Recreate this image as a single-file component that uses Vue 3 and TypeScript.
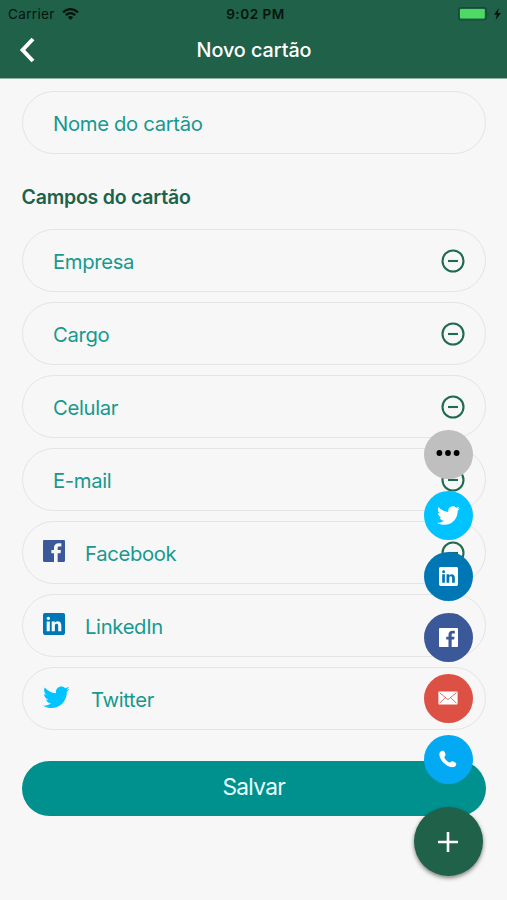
<script setup lang="ts">
type Brand = 'facebook' | 'linkedin' | 'twitter'

interface Field {
  label: string
  brand?: Brand
}

const brandShapes: Record<Brand, { box: string; d: string }> = {
  facebook: {
    box: '64 64 384 384',
    d: 'M426.8 64H85.2C73.5 64 64 73.5 64 85.2v341.6c0 11.7 9.5 21.2 21.2 21.2H256V296h-45.9v-56H256v-41.4c0-49.6 34.4-76.6 78.7-76.6 21.2 0 44 1.6 49.3 2.3v51.8h-35.3c-24.1 0-28.7 11.4-28.7 28.2V240h57.4l-7.5 56H320v152h106.8c11.7 0 21.2-9.5 21.2-21.2V85.2c0-11.7-9.5-21.2-21.2-21.2z',
  },
  linkedin: {
    box: '64 64 384 384',
    d: 'M417.2 64H96.8C79.3 64 64 76.6 64 93.9V415c0 17.4 15.3 32.9 32.8 32.9h320.3c17.6 0 30.8-15.6 30.8-32.9V93.9C448 76.6 434.7 64 417.2 64zM183 384h-55V213h55v171zm-25.6-197h-.4c-17.6 0-29-13.1-29-29.5 0-16.7 11.7-29.5 29.7-29.5s29 12.7 29.4 29.5c0 16.4-11.4 29.5-29.7 29.5zM384 384h-55v-93.5c0-22.4-8-37.7-27.9-37.7-15.2 0-24.2 10.3-28.2 20.3-1.5 3.6-1.9 8.5-1.9 13.5V384h-55V213h55v23.8c8-11.4 20.5-27.8 49.6-27.8 36.1 0 63.4 23.8 63.4 75.1V384z',
  },
  twitter: {
    box: '20 64 472 384',
    d: 'M492 109.5c-17.4 7.7-36 12.9-55.6 15.3 20-12 35.4-31 42.6-53.6-18.7 11.1-39.4 19.2-61.5 23.5C399.8 75.8 374.6 64 346.8 64c-53.5 0-96.8 43.4-96.8 96.9 0 7.6.8 15 2.5 22.1-80.5-4-151.9-42.6-199.6-101.3-8.3 14.3-13.1 31-13.1 48.7 0 33.6 17.2 63.3 43.2 80.7-16-.4-31-4.8-44-12.1v1.2c0 47 33.4 86.1 77.7 95-8.1 2.2-16.7 3.4-25.5 3.4-6.2 0-12.3-.6-18.2-1.8 12.3 38.5 48.1 66.5 90.5 67.3-33.1 26-74.9 41.5-120.3 41.5-7.8 0-15.5-.5-23.1-1.4C62.8 432 113.7 448 168.3 448 346.6 448 444 300.3 444 172.2c0-4.2-.1-8.4-.3-12.5C462.6 146 479 129 492 109.5z',
  },
}

const fields: Field[] = [
  { label: 'Empresa' },
  { label: 'Cargo' },
  { label: 'Celular' },
  { label: 'E-mail' },
  { label: 'Facebook', brand: 'facebook' },
  { label: 'LinkedIn', brand: 'linkedin' },
  { label: 'Twitter', brand: 'twitter' },
]

const brandActions: Brand[] = ['twitter', 'linkedin', 'facebook']
</script>

<template>
  <div class="screen">
    <header class="header">
      <div class="status">
        <div class="status-left">
          <span class="carrier">Carrier</span>
          <svg class="wifi" viewBox="0 0 17 12">
            <g fill="none" stroke="#06140e" stroke-width="2.3">
              <path d="M1 4.3Q8.5 -2 16 4.3" />
              <path d="M3.8 7.2Q8.5 3.1 13.2 7.2" />
            </g>
            <path d="M5.8 9.2Q8.5 7 11.2 9.2L8.5 12z" fill="#06140e" />
          </svg>
        </div>
        <span class="clock">9:02 PM</span>
        <div class="status-right">
          <svg class="battery" viewBox="0 0 32 14">
            <rect x=".6" y=".6" width="27.6" height="12.4" rx="2.4" fill="none" stroke="#164a35" stroke-width="1.2" />
            <rect x="2" y="2" width="24.8" height="9.6" rx=".8" fill="#4cd964" />
            <path d="M29.6 4.6q1.8 2.2 0 4.4z" fill="#164a35" />
          </svg>
          <svg class="bolt" viewBox="0 0 7 12"><path d="M4.8 0L0 6.800h2.800L1.600 12 7 4.900H4z" fill="#06140e" /></svg>
        </div>
      </div>
      <div class="navbar">
        <svg class="back" viewBox="0 0 16 26"><path d="M14 2L3.600 13 14 24" fill="none" stroke="#fff" stroke-width="4" /></svg>
        <h1 class="title">Novo cartão</h1>
      </div>
    </header>

    <main class="form">
      <div class="field name-field"><span class="label">Nome do cartão</span></div>
      <h2 class="section">Campos do cartão</h2>
      <div class="fields">
        <div v-for="f in fields" :key="f.label" class="field">
          <svg v-if="f.brand" class="brand" :class="f.brand" :viewBox="brandShapes[f.brand].box">
            <path :d="brandShapes[f.brand].d" />
          </svg>
          <span class="label">{{ f.label }}</span>
          <svg class="remove" viewBox="0 0 24 24">
            <circle cx="12" cy="12" r="10.5" />
            <path d="M7 12h10" />
          </svg>
        </div>
      </div>
      <button class="save">Salvar</button>
    </main>

    <div class="actions">
      <div class="action more">
        <svg width="24" height="6" viewBox="0 0 24 6"><circle cx="3.400" cy="3" r="2.900" /><circle cx="12" cy="3" r="2.900" /><circle cx="20.600" cy="3" r="2.900" /></svg>
      </div>
      <div v-for="b in brandActions" :key="b" class="action" :class="b">
        <svg class="glyph" :viewBox="brandShapes[b].box"><path :d="brandShapes[b].d" /></svg>
      </div>
      <div class="action mail">
        <svg width="20" height="14" viewBox="0 0 20 14">
          <rect x=".4" y=".4" width="19.2" height="13.2" rx=".8" fill="#fff" />
          <path d="M1.400 1.600L10 8.600l8.600-7M1.600 12.200l5.600-5.400M18.400 12.200l-5.600-5.400" fill="none" stroke="#dd5044" stroke-width=".8" />
        </svg>
      </div>
      <div class="action phone">
        <svg width="18" height="18" viewBox="0 0 18 18">
          <path d="M.5 3.300C1 1.300 3 .2 4.300.8c1.300.7 2.200 2.700 2.300 3.900.1 1.200-1.400 1.700-1.200 2.700.5 1.600 3.300 4.500 5.200 5 1 .2 1.500-1.300 2.700-1.200 1.200.1 3.200 1.200 3.800 2.300.6 1.300-.6 3-2.600 3.600C8.500 18.600-.8 9 .5 3.300z" fill="#fff" />
        </svg>
      </div>
      <div class="fab">
        <svg width="20" height="20" viewBox="0 0 20 20"><path d="M10 0v20M0 10h20" stroke="#fff" stroke-width="2.600" /></svg>
      </div>
    </div>
  </div>
</template>

<style>
body {
  margin: 0;
  background: #f7f7f7;
}
</style>

<style scoped>
.screen {
  position: relative;
  width: 507px;
  height: 900px;
  overflow: hidden;
  background: #f7f7f7;
  font-family: Inter, 'Liberation Sans', sans-serif;
}
.header {
  height: 79px;
  background: #206249;
  border-bottom: 1px solid #8fb0a4;
  box-sizing: border-box;
}
.status {
  display: grid;
  grid-template-columns: 1fr auto 1fr;
  align-items: center;
  height: 28px;
  padding: 0 6px 0 8px;
  color: #06140e;
  font-size: 13.6px;
}
.status-left,
.status-right {
  display: flex;
  align-items: center;
}
.status-left {
  gap: 7px;
}
.status-right {
  justify-content: flex-end;
  gap: 4px;
}
.carrier {
  letter-spacing: 0.3px;
}
.clock {
  padding-left: 2px;
  font-weight: 600;
  letter-spacing: 0.5px;
}
.wifi {
  width: 17px;
  height: 12px;
}
.battery {
  width: 32px;
  height: 14px;
}
.bolt {
  width: 7px;
  height: 12px;
}
.navbar {
  display: grid;
  grid-template-columns: 60px 1fr 60px;
  align-items: center;
  height: 44px;
}
.back {
  width: 16px;
  height: 26px;
  margin-left: 19px;
}
.title {
  margin: 0;
  padding-left: 1px;
  text-align: center;
  color: #fff;
  font-size: 19.8px;
  font-weight: 500;
  letter-spacing: -0.05px;
}
.form {
  display: flex;
  flex-direction: column;
  padding: 12.3px 21px 0 21.500px;
}
.field {
  display: flex;
  align-items: center;
  box-sizing: border-box;
  height: 63px;
  padding: 0 20.500px 0 30.500px;
  border: 1px solid #e4e4e4;
  border-radius: 32px;
  color: #17998f;
  font-size: 20.3px;
  letter-spacing: -0.35px;
}
.field:has(.brand) {
  padding-left: 20.500px;
}
.label {
  flex: 1;
  padding-top: 2px;
}
.section {
  margin: 0;
  height: 75px;
  padding-top: 30px;
  box-sizing: border-box;
  color: #206249;
  font-size: 19.5px;
  line-height: 26px;
  font-weight: 600;
  letter-spacing: -0.22px;
}
.fields {
  display: grid;
  gap: 9.950px;
}
.brand {
  width: 22px;
  height: 22px;
  margin: 0 20px 3px 0;
}
.brand.facebook {
  fill: #3b5998;
}
.brand.linkedin {
  fill: #0077b5;
}
.brand.twitter {
  width: 26.500px;
  height: 22.500px;
  margin-right: 21.500px;
  fill: #00c3ff;
}
.remove {
  width: 24px;
  height: 24px;
  fill: none;
  stroke: #206b50;
  stroke-width: 2.1;
}
.save {
  height: 55px;
  margin-top: 31.500px;
  padding: 0 0 4px;
  border: 0;
  border-radius: 28px;
  background: #00918f;
  color: #e9fffb;
  font: 400 22.700px Inter, 'Liberation Sans', sans-serif;
  letter-spacing: -0.7px;
}
.actions {
  position: absolute;
  top: 429.5px;
  right: 24.500px;
  display: flex;
  flex-direction: column;
  align-items: center;
  gap: 12.1px;
}
.action,
.fab {
  display: flex;
  align-items: center;
  justify-content: center;
  border-radius: 50%;
}
.action {
  width: 49px;
  height: 49px;
}
.glyph {
  width: 19px;
  height: 19px;
  fill: #fff;
}
.action.twitter .glyph {
  width: 23px;
}
.more {
  background: #bfbfbf;
}
.more svg {
  margin-bottom: 2px;
}
.action.twitter {
  background: #00c3ff;
}
.action.linkedin {
  background: #0077b5;
}
.action.facebook {
  background: #3b5998;
}
.mail {
  background: #dd5044;
}
.phone {
  background: #04a9f4;
}
.fab {
  width: 69px;
  height: 69px;
  margin-top: 10.5px;
  background: #206249;
  box-shadow: 0 2px 4px rgba(0, 0, 0, 0.5);
}
.fab svg {
  margin-top: 1px;
}
</style>
